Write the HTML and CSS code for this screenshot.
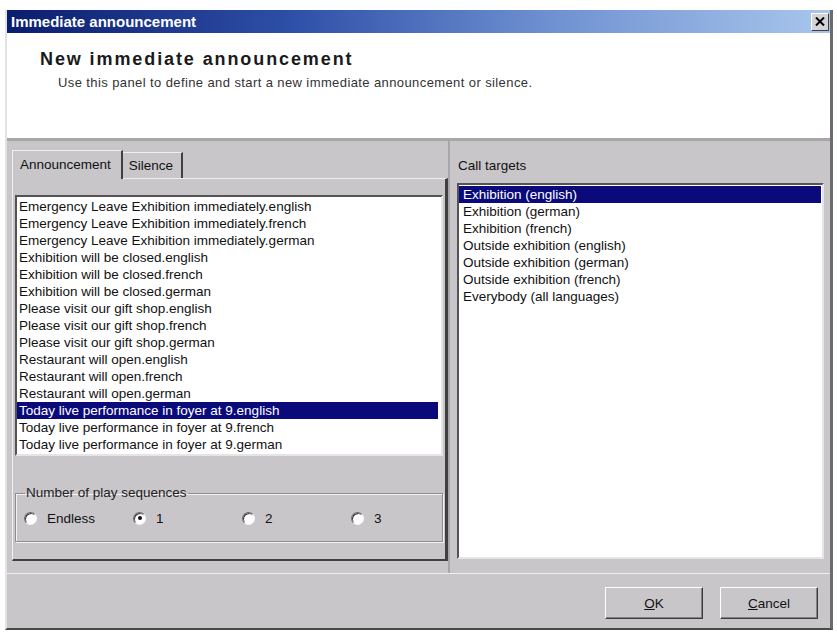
FILE: index.html
```html
<!DOCTYPE html>
<html lang="en">
<head>
	<title>Immediate announcement</title>
	<meta charset="UTF-8">
	<link rel="stylesheet" href="styles.css">
</head>
<body>
	<div class="window">
		<div class="titlebar">
			<span class="title">Immediate announcement</span>
			<span class="close">
				<svg width="10" height="9" viewBox="0 0 10 9"><path d="M1 0.5 L9 8.5 M9 0.5 L1 8.5" stroke="#000" stroke-width="2"/></svg>
			</span>
		</div>
		<div class="header">
			<h1>New immediate announcement</h1>
			<p>Use this panel to define and start a new immediate announcement or silence.</p>
		</div>
		<div class="main">
			<div class="left">
				<div class="tabs">
					<div class="tab active">Announcement</div>
					<div class="tab">Silence</div>
				</div>
				<div class="tabpanel">
					<ul class="listbox announcements">
						<li>Emergency Leave Exhibition immediately.english</li>
						<li>Emergency Leave Exhibition immediately.french</li>
						<li>Emergency Leave Exhibition immediately.german</li>
						<li>Exhibition will be closed.english</li>
						<li>Exhibition will be closed.french</li>
						<li>Exhibition will be closed.german</li>
						<li>Please visit our gift shop.english</li>
						<li>Please visit our gift shop.french</li>
						<li>Please visit our gift shop.german</li>
						<li>Restaurant will open.english</li>
						<li>Restaurant will open.french</li>
						<li>Restaurant will open.german</li>
						<li class="selected">Today live performance in foyer at 9.english</li>
						<li>Today live performance in foyer at 9.french</li>
						<li>Today live performance in foyer at 9.german</li>
					</ul>
					<fieldset class="group">
						<legend>Number of play sequences</legend>
						<div class="radios">
							<label class="option"><span class="radio"></span>Endless</label>
							<label class="option"><span class="radio checked"></span>1</label>
							<label class="option"><span class="radio"></span>2</label>
							<label class="option"><span class="radio"></span>3</label>
						</div>
					</fieldset>
				</div>
			</div>
			<div class="right">
				<div class="label">Call targets</div>
				<ul class="listbox targets">
					<li class="selected">Exhibition (english)</li>
					<li>Exhibition (german)</li>
					<li>Exhibition (french)</li>
					<li>Outside exhibition (english)</li>
					<li>Outside exhibition (german)</li>
					<li>Outside exhibition (french)</li>
					<li>Everybody (all languages)</li>
				</ul>
			</div>
		</div>
		<div class="footer">
			<button class="button"><u>O</u>K</button>
			<button class="button"><u>C</u>ancel</button>
		</div>
	</div>
</body>
</html>
```
FILE: styles.css
```css
body {
	margin: 0;
	background: #fff;
	font-family: "Liberation Sans", Arial, sans-serif;
	font-size: 13.5px;
	color: #111;
}
.window {
	margin: 10px 0 0 5px;
	width: 828px;
	height: 620px;
	box-sizing: border-box;
	background: #c9c6ca;
	border-left: 2px solid #e4e2e4;
	border-right: 3px solid #6d6a6e;
	border-bottom: 2px solid #4a484b;
	display: flex;
	flex-direction: column;
}
.titlebar {
	height: 23px;
	flex: none;
	display: flex;
	align-items: center;
	justify-content: space-between;
	background: linear-gradient(to right, #0a1d6e 0%, #2f50a8 35%, #6d8fd0 65%, #a8c6ec 100%);
}
.title {
	color: #fff;
	font-weight: bold;
	font-size: 15px;
	padding-left: 4px;
}
.close {
	width: 18px;
	height: 18px;
	box-sizing: border-box;
	margin-right: 1px;
	background: #d6d3d6;
	border: 1px solid;
	border-color: #fff #404040 #404040 #fff;
	display: flex;
	align-items: center;
	justify-content: center;
}
.header {
	height: 108px;
	flex: none;
	box-sizing: border-box;
	background: #fff;
	border-bottom: 3px solid #a9a6aa;
	padding: 15px 0 0 33px;
}
.header h1 {
	margin: 0;
	font-size: 18px;
	line-height: 22px;
	font-weight: bold;
	letter-spacing: 1.9px;
	color: #1a1a1a;
}
.header p {
	margin: 5px 0 0 18px;
	font-size: 13px;
	line-height: 16px;
	letter-spacing: 0.4px;
	color: #333;
}
.main {
	height: 432px;
	flex: none;
	display: flex;
}
.left {
	width: 441px;
	flex: none;
	padding: 9px 0 0 5px;
	box-sizing: border-box;
}
.tabs {
	display: flex;
	align-items: flex-end;
	height: 28px;
}
.tab {
	height: 25px;
	line-height: 25px;
	padding: 0 8px 0 6px;
	border-top: 1px solid #f0eef0;
	border-right: 2px solid #404040;
}
.tab.active {
	height: 28px;
	line-height: 28px;
	padding: 0 10px 0 7px;
	border-left: 1px solid #f0eef0;
	margin-bottom: -1px;
	background: #c9c6ca;
	position: relative;
}
.tabpanel {
	height: 383px;
	box-sizing: border-box;
	border-top: 1px solid #f0eef0;
	border-left: 1px solid #f0eef0;
	border-right: 3px solid #404040;
	border-bottom: 2px solid #404040;
	padding: 16px 0 0 2px;
}
.listbox {
	list-style: none;
	margin: 0;
	padding: 1px 0 0;
	background: #fff;
	border: 2px solid;
	border-color: #555356 #e6e4e6 #e6e4e6 #555356;
	box-sizing: border-box;
}
.listbox li {
	height: 17px;
	line-height: 17px;
	padding-left: 2px;
	white-space: nowrap;
}
.listbox li.selected {
	background: #0b0a7a;
	color: #fff;
}
.announcements {
	width: 428px;
	height: 261px;
}
.announcements li {
	margin-right: 3px;
}
.group {
	margin: 29px 0 0;
	width: 428px;
	min-width: 0;
	box-sizing: border-box;
	padding: 9px 8px 15px;
	border: 1px solid #8f8c90;
	box-shadow: inset 1px 1px #f4f2f4, 1px 1px #f4f2f4;
}
.group legend {
	padding: 0 1px;
	margin-left: 1px;
	line-height: 16px;
	color: #222;
}
.radios {
	display: grid;
	grid-template-columns: 109px 109px 109px 1fr;
	height: 16px;
	align-items: center;
}
.option {
	display: flex;
	align-items: center;
}
.radio {
	width: 13px;
	height: 13px;
	box-sizing: border-box;
	border-radius: 50%;
	background: #fff;
	border: 1px solid;
	border-color: #6e6b6f #f6f6f6 #f6f6f6 #6e6b6f;
	box-shadow: inset 1px 1px #3c3a3d;
	margin-right: 10px;
	display: flex;
	align-items: center;
	justify-content: center;
}
.radio.checked::after {
	content: "";
	width: 4px;
	height: 4px;
	border-radius: 50%;
	background: #111;
}
.right {
	flex: 1;
	border-left: 2px solid #a9a6aa;
	padding: 16px 6px 0 7px;
}
.label {
	line-height: 17px;
	padding-left: 1px;
}
.targets {
	margin-top: 9px;
	height: 376px;
}
.targets li {
	padding-left: 4px;
	margin-right: 1px;
}
.footer {
	flex: 1;
	border-top: 1px solid #f0eef0;
	display: flex;
	justify-content: flex-end;
	align-items: flex-start;
	gap: 17px;
	padding: 13px 12px 0 0;
}
.button {
	width: 98px;
	height: 32px;
	background: #c9c6ca;
	border: 1px solid;
	border-color: #fff #3c3a3d #3c3a3d #fff;
	box-shadow: inset -1px -1px #858286;
	font-family: inherit;
	font-size: 13.5px;
	color: #111;
	padding: 0;
}
```
